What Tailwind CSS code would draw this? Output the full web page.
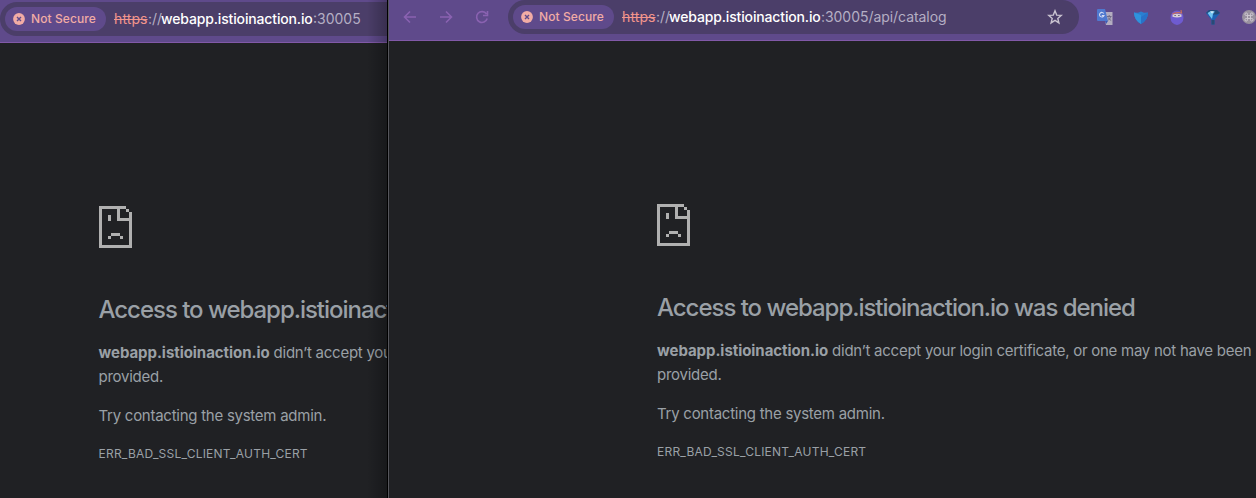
<!DOCTYPE html>
<html lang="en">
<head>
<meta charset="utf-8">
<title>Access denied</title>
<script src="https://cdn.jsdelivr.net/npm/@tailwindcss/browser@4"></script>
</head>
<body class="flex h-[498px] w-[1256px] overflow-hidden bg-[#202124] font-['Inter',sans-serif] text-[#9aa0a6]">
<svg class="hidden">
  <symbol id="sad" viewBox="0 0 11 14"><path fill="#b0b0b0" shape-rendering="crispEdges" d="M0 0h9v1H7v3h3V2h1v12H0zM1 1v12h9V5H6V1zM9 1h1v1H9zM3 3h1v2H3zM4 9h3v1H4zM3 10h1v1H3zM7 10h1v1H7z" fill-rule="evenodd"/></symbol>
  <symbol id="bad" viewBox="0 0 12 12"><circle cx="6" cy="6" r="5.9" fill="#f2aca5"/><path d="M4 4l4 4M8 4l-4 4" stroke="#5f4a8b" stroke-width="1.4"/></symbol>
</svg>

<section class="relative w-[388px] shrink-0 overflow-hidden border-r border-black">
  <header class="flex h-[43px] w-[600px] items-start border-b border-[#8159a8] bg-[#5f4a8b] pt-0.5">
    <div class="flex h-[34px] w-[590px] items-center rounded-full bg-[#4b3e69] pl-[5px]">
      <div class="flex h-6 w-[101px] items-center rounded-full bg-[#5f4a8b] pl-2">
        <svg class="size-3"><use href="#bad"/></svg>
        <span class="ml-1.5 text-[12px] font-medium tracking-[0.1px] text-[#f2aca5] whitespace-nowrap">Not Secure</span>
      </div>
      <div class="ml-2 flex pb-0.5 text-[14px] whitespace-nowrap text-[#b5aec4]"><span class="w-[34px] tracking-[0.1px] text-[#f2958c] line-through">https</span><span class="w-[13px]">://</span><span class="w-[152px] font-medium tracking-[-0.15px] text-white">webapp.istioinaction.io</span><span>:30005</span></div>
    </div>
  </header>
  <main class="ml-[98.5px] w-[620px] pt-[163px]">
    <svg class="ml-[0.5px] h-[42px] w-[33px]"><use href="#sad"/></svg>
    <h1 class="mt-[47px] text-[24px] leading-[30px] font-medium tracking-[-1.03px] whitespace-nowrap">Access to webapp.istioinaction.io was denied</h1>
    <p class="mt-4 text-[15px] leading-6 tracking-[-0.26px] whitespace-nowrap"><b class="mr-1 font-bold tracking-[-0.05px]">webapp.istioinaction.io</b>didn’t accept your login certificate, or one may not have been<br>provided.</p>
    <p class="mt-[15px] text-[15px] leading-6 tracking-[-0.26px]">Try contacting the system admin.</p>
    <p class="mt-[15px] text-[12px] leading-[22px] tracking-[0.22px]">ERR_BAD_SSL_CLIENT_AUTH_CERT</p>
  </main>
  <div class="absolute inset-y-0 right-0 w-5 bg-linear-to-r from-black/0 to-black/25"></div>
</section>

<section class="w-[868px] shrink-0 overflow-hidden border-l border-[#56565c]">
  <header class="flex h-[41px] items-start border-b border-[#8159a8] bg-[#5f4a8b]">
    <div class="flex h-[34px] w-[119px] shrink-0 items-center gap-5 pl-[13px]">
      <svg class="size-4" viewBox="0 0 16 16" fill="none" stroke="#8a62b1" stroke-width="1.6"><path d="M14 8H3M8 2.5L2.5 8 8 13.5"/></svg>
      <svg class="size-4" viewBox="0 0 16 16" fill="none" stroke="#8a62b1" stroke-width="1.6"><path d="M2 8h11M8 2.5L13.500 8 8 13.5"/></svg>
      <svg class="size-4" viewBox="0 0 16 16" fill="none" stroke="#8a62b1" stroke-width="1.6"><path d="M13.200 9.500A5.400 5.400 0 1 1 12.500 5M13.500 2v4.500H9"/></svg>
    </div>
    <div class="flex h-[34px] w-[571px] shrink-0 items-center rounded-full bg-[#4b3e69] pl-[5px]">
      <div class="flex h-6 w-[101px] items-center rounded-full bg-[#5f4a8b] pl-2">
        <svg class="size-3"><use href="#bad"/></svg>
        <span class="ml-1.5 text-[12px] font-medium tracking-[0.1px] text-[#f2aca5] whitespace-nowrap">Not Secure</span>
      </div>
      <div class="ml-2 flex pb-0.5 text-[14px] whitespace-nowrap text-[#b5aec4]"><span class="w-[34px] tracking-[0.1px] text-[#f2958c] line-through">https</span><span class="w-[13px]">://</span><span class="w-[152px] font-medium tracking-[-0.15px] text-white">webapp.istioinaction.io</span><span class="tracking-[-0.05px]">:30005/api/catalog</span></div>
      <svg class="mr-4 ml-auto size-4" viewBox="0 0 16 16" fill="none" stroke="#c9c3d0" stroke-width="1.4"><path d="M8 1.800l1.700 4.300 4.600.3-3.500 3 1.100 4.500L8 11.400l-3.900 2.500 1.100-4.500-3.500-3 4.600-.3z"/></svg>
    </div>
    <div class="flex h-[34px] shrink-0 items-center gap-5 pl-[18px]">
      <svg class="size-4 shrink-0" viewBox="0 0 16 16"><path d="M6 3h9.500v13H9z" fill="#b3adc0"/><path d="M0 1q0-1 1-1h7l3 12H1q-1 0-1-1z" fill="#4f78cf"/><path d="M8 12h3l-2 3z" fill="#3a58b5"/><path d="M6.800 4.500A2.300 2.300 0 1 0 7 6.500H4.800" fill="none" stroke="#d5dcf2" stroke-width="1.100"/><path d="M10 7.500h4.500M12.200 6v1.500M13.700 7.500Q13 10 11 11.500M11.200 8.500q1 2 3 3" fill="none" stroke="#706b87"/></svg>
      <svg class="size-4 shrink-0" viewBox="0 0 16 16"><path d="M1 3.500l4 .3 3-1.300 3 1.300 4-.3Q15 11 8 15 1 11 1 3.500z" fill="#2a7fd0"/><path d="M1 3.500L8 6v9Q1 11 1 3.500z" fill="#3092dc"/><path d="M8 8l7-4.500Q15 11 8 15z" fill="#2872c8"/></svg>
      <svg class="size-4 shrink-0" viewBox="0 0 16 16"><ellipse cx="8" cy="8.700" rx="6.500" ry="7.200" fill="#6e5bd0"/><path d="M3.500 5.500Q8 4 12.500 5.500v2.300Q8 9.300 3.500 7.800z" fill="#d6ced5"/><path d="M3.500 5Q8 3 12.500 4L12 1" stroke="#c66e5c" stroke-width="1.200" fill="none"/><path d="M5.500 6.500h1.200M9.300 6.500h1.200" stroke="#51466e" stroke-width="1.200"/></svg>
      <svg class="size-4 shrink-0" viewBox="0 0 16 16"><path d="M1 4l3-3h8l3 3-5.500 7v4.500h-3V11z" fill="#1b62b5"/><path d="M4 1h8l3 3-3 1.500H4L1 4z" fill="#224a79"/><path d="M2.500 4L5 2.500h5L8 5l-1 5z" fill="#6fc4f2"/><path d="M5 2.200h4L7 4.500z" fill="#d8f1fb"/><path d="M6.500 11h3v4.500h-3z" fill="#294a76"/></svg>
      <svg class="size-4 shrink-0" viewBox="0 0 16 16"><circle cx="8" cy="8" r="7" fill="#99919f"/><path d="M6.500 6.500h3v3h-3zM6.500 6.500H5.200a1.300 1.300 0 1 1 1.300-1.300zM9.500 6.500V5.200a1.300 1.300 0 1 1 1.300 1.300zM9.500 9.500h1.300a1.300 1.300 0 1 1-1.300 1.300zM6.500 9.500v1.300a1.300 1.300 0 1 1-1.300-1.300z" fill="none" stroke="#d2ccd5" stroke-width=".9"/></svg>
    </div>
  </header>
  <main class="ml-[268px] w-[600px] pt-[163px]">
    <svg class="h-[42px] w-[33px]"><use href="#sad"/></svg>
    <h1 class="mt-[47px] text-[24px] leading-[30px] font-medium tracking-[-1.03px] whitespace-nowrap">Access to webapp.istioinaction.io was denied</h1>
    <p class="mt-4 text-[15px] leading-6 tracking-[-0.26px] whitespace-nowrap"><b class="mr-1 font-bold tracking-[-0.05px]">webapp.istioinaction.io</b>didn’t accept your login certificate, or one may not have been<br>provided.</p>
    <p class="mt-[15px] text-[15px] leading-6 tracking-[-0.26px]">Try contacting the system admin.</p>
    <p class="mt-[15px] text-[12px] leading-[22px] tracking-[0.22px]">ERR_BAD_SSL_CLIENT_AUTH_CERT</p>
  </main>
</section>
</body>
</html>
